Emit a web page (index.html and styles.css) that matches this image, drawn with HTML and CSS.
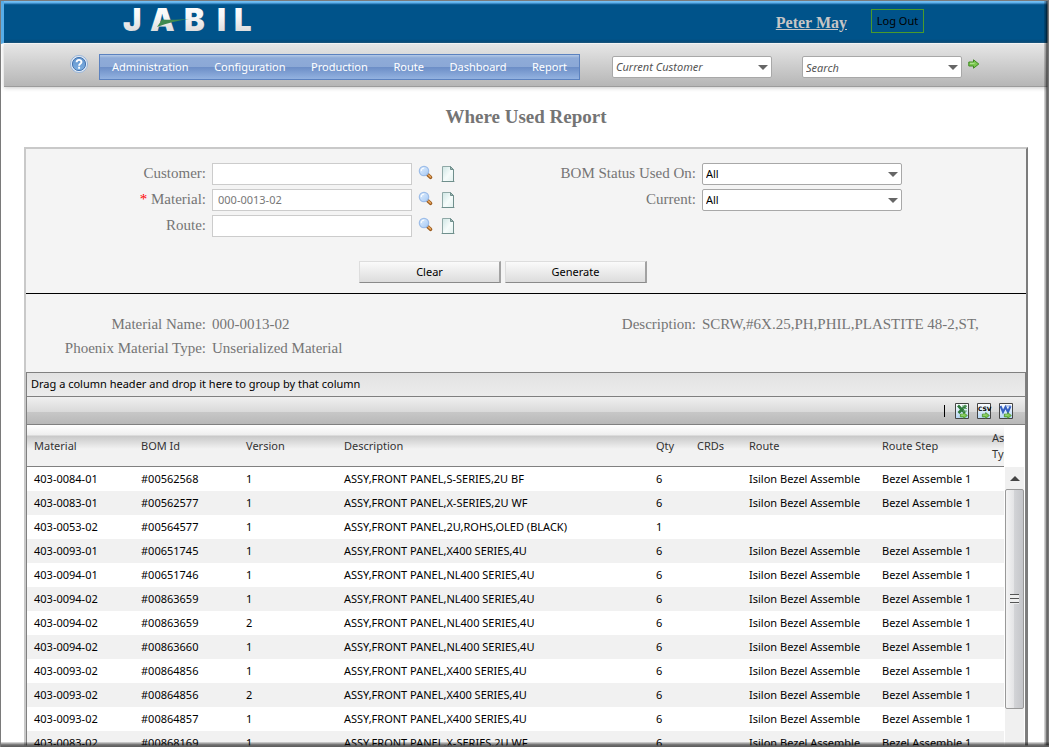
FILE: index.html
```html
<!DOCTYPE html>
<html lang="en">
<head>
<meta charset="utf-8">
<title>Where Used Report</title>
<link rel="stylesheet" href="styles.css">
</head>
<body>
<svg width="0" height="0" class="defs" aria-hidden="true">
  <defs>
    <linearGradient id="lens" x1="0" y1="0" x2="1" y2="1"><stop offset="0" stop-color="#e4f1ff"/><stop offset="1" stop-color="#a4c8f4"/></linearGradient>
    <linearGradient id="paper" x1="0" y1="0" x2="1" y2="1"><stop offset="0" stop-color="#cfe6e4"/><stop offset=".55" stop-color="#f6fcfb"/><stop offset="1" stop-color="#e2f0ee"/></linearGradient>
    <linearGradient id="sheet" x1="0" y1="0" x2="0" y2="1"><stop offset="0" stop-color="#ffffff"/><stop offset="1" stop-color="#b4d6f4"/></linearGradient>
    <linearGradient id="metal" x1="0" y1="0" x2="0" y2="1"><stop offset="0" stop-color="#ffffff"/><stop offset=".4" stop-color="#f8f8f8"/><stop offset="1" stop-color="#d2d2d2"/></linearGradient>
    <linearGradient id="ball" x1="0" y1="0" x2="0" y2="1"><stop offset="0" stop-color="#5f92cc"/><stop offset="1" stop-color="#7fb0e2"/></linearGradient>
    <symbol id="search" viewBox="0 0 16 16">
      <path d="M9.5 9.5 12.500 12.300" stroke="#9a5a1c" stroke-width="3.6" stroke-linecap="round"/>
      <path d="M10.6 10.2 12.500 12" stroke="#e9a860" stroke-width="1.6" stroke-linecap="round"/>
      <circle cx="6" cy="6" r="4.7" fill="url(#lens)" stroke="#9dbde8" stroke-width="1.2"/>
      <path d="M3.2 6a3 3 0 0 1 3-3" fill="none" stroke="#fff"/>
    </symbol>
    <symbol id="page" viewBox="0 0 16 18">
      <path d="M1 16.5h14" stroke="#c3cfce"/>
      <path d="M2.5 1.5h8l3 3v12h-11z" fill="url(#paper)" stroke="#8fa8a6"/>
      <path d="M10.5 1.5v3h3z" fill="#9fb8b5" stroke="#6f8f8c"/>
      <path d="M2 16.5h12M13.5 5v11" stroke="#6f8f8c"/>
    </symbol>
    <symbol id="arrow" viewBox="0 0 12 10">
      <path d="M.8 3h4.7V.8L10.8 5 5.500 9.200V7H.8z" fill="#7cc850" stroke="#3f8a22" stroke-linejoin="round"/>
      <path d="M2 4.300h4.500" stroke="#b8e89c"/>
    </symbol>
  </defs>
</svg>

<div class="app">
  <header class="banner">
    <svg class="logo" viewBox="0 0 136 28" role="img" aria-label="Jabil">
      <text class="wordmark" y="26" x="0 27 61 94 111" fill="url(#metal)">JABIL</text>
      <path d="M34 22 39 14.500C48 15 58 14.500 66 14 56 15.500 44 18 34 22z" fill="#3f8a50"/>
    </svg>
    <div class="user">
      <a class="user-name" href="#">Peter May</a>
      <button class="logout" type="button">Log Out</button>
    </div>
  </header>

  <div class="navbar">
    <a class="help" href="#" aria-label="Help">
      <svg width="20" height="20" viewBox="0 0 20 20"><circle cx="10" cy="10" r="8.600" fill="#dfe9f5" stroke="#9db8da"/><circle cx="10" cy="10" r="6.600" fill="url(#ball)" stroke="#4675b0"/><path d="M7.600 8.300c0-3.200 4.900-3.200 4.900-.2 0 1.700-2.400 1.700-2.400 3.600M10.100 12.700v2" fill="none" stroke="#fff" stroke-width="1.900"/></svg>
    </a>
    <nav class="menu">
      <a href="#">Administration</a>
      <a href="#">Configuration</a>
      <a href="#">Production</a>
      <a href="#">Route</a>
      <a href="#">Dashboard</a>
      <a href="#">Report</a>
    </nav>
    <div class="combo nav-combo customer-combo">
      <select aria-label="Current Customer"><option>Current Customer</option></select>
    </div>
    <div class="combo nav-combo">
      <input type="text" placeholder="Search" aria-label="Search">
    </div>
    <button class="icon-button go" type="button" aria-label="Go"><svg width="12" height="10"><use href="#arrow"/></svg></button>
  </div>

  <main>
    <h1 class="title">Where Used Report</h1>
    <section class="panel">
      <form class="filters">
        <div class="columns">
          <div class="left">
            <div class="field">
              <label for="customer">Customer:</label>
              <input class="text" id="customer" type="text">
              <button class="icon-button" type="button" aria-label="Find customer"><svg width="16" height="16"><use href="#search"/></svg></button>
              <button class="icon-button" type="button" aria-label="Clear customer"><svg width="16" height="18"><use href="#page"/></svg></button>
            </div>
            <div class="field">
              <label for="material"><span class="required">*</span> Material:</label>
              <input class="text" id="material" type="text" value="000-0013-02">
              <button class="icon-button" type="button" aria-label="Find material"><svg width="16" height="16"><use href="#search"/></svg></button>
              <button class="icon-button" type="button" aria-label="Clear material"><svg width="16" height="18"><use href="#page"/></svg></button>
            </div>
            <div class="field">
              <label for="route">Route:</label>
              <input class="text" id="route" type="text">
              <button class="icon-button" type="button" aria-label="Find route"><svg width="16" height="16"><use href="#search"/></svg></button>
              <button class="icon-button" type="button" aria-label="Clear route"><svg width="16" height="18"><use href="#page"/></svg></button>
            </div>
          </div>
          <div class="right">
            <div class="field">
              <label for="status">BOM Status Used On:</label>
              <div class="combo"><select id="status"><option>All</option></select></div>
            </div>
            <div class="field">
              <label for="current">Current:</label>
              <div class="combo"><select id="current"><option>All</option></select></div>
            </div>
          </div>
        </div>
        <div class="actions">
          <button class="push" type="button">Clear</button>
          <button class="push" type="button">Generate</button>
        </div>
      </form>

      <div class="columns details">
        <dl class="left">
          <div class="field"><dt>Material Name:</dt><dd>000-0013-02</dd></div>
          <div class="field"><dt>Phoenix Material Type:</dt><dd>Unserialized Material</dd></div>
        </dl>
        <dl class="right">
          <div class="field"><dt>Description:</dt><dd>SCRW,#6X.25,PH,PHIL,PLASTITE 48-2,ST,</dd></div>
        </dl>
      </div>

      <div class="grid">
        <div class="group-bar">Drag a column header and drop it here to group by that column</div>
        <div class="toolbar">
          <span class="separator"></span>
          <button class="icon-button" type="button" aria-label="Export to Excel"><svg width="16" height="16" viewBox="0 0 16 16"><path d="M1.500.5h13v15h-13z" fill="url(#sheet)" stroke="#444"/><path d="M4 2.500 11 10M12 2.500 4.500 10" stroke="#2f7a3c" stroke-width="2.600"/><path d="M8 3h5M9 5.500h4M9 8h4" stroke="#6aa870"/><use href="#arrow" x="5" y="9" width="10" height="7"/></svg></button>
          <button class="icon-button" type="button" aria-label="Export to CSV"><svg width="16" height="16" viewBox="0 0 16 16"><path d="M1.500.5h13v15h-13z" fill="url(#sheet)" stroke="#444"/><text class="csv" x="2" y="8">CSV</text><use href="#arrow" x="5" y="9" width="10" height="7"/></svg></button>
          <button class="icon-button" type="button" aria-label="Export to Word"><svg width="16" height="16" viewBox="0 0 16 16"><path d="M1.500.5h13v15h-13z" fill="url(#sheet)" stroke="#444"/><path d="M2.500 3 5 9 7.500 4 10 9 12.500 3" fill="none" stroke="#3560c0" stroke-width="2"/><path d="M8 3h5" stroke="#7c9ce0"/><use href="#arrow" x="5" y="9" width="10" height="7"/></svg></button>
        </div>
        <div class="grid-body">
          <div class="rows">
            <table>
              <colgroup><col class="c-material"><col class="c-bom"><col class="c-version"><col><col class="c-qty"><col class="c-crds"><col class="c-route"><col class="c-step"><col class="c-type"></colgroup>
              <thead><tr><th>Material</th><th>BOM Id</th><th>Version</th><th>Description</th><th>Qty</th><th>CRDs</th><th>Route</th><th>Route Step</th><th>Assembly Type</th></tr></thead>
              <tbody>
                <tr><td>403-0084-01</td><td>#00562568</td><td>1</td><td>ASSY,FRONT PANEL,S-SERIES,2U BF</td><td>6</td><td></td><td>Isilon Bezel Assemble</td><td>Bezel Assemble 1</td><td></td></tr>
                <tr><td>403-0083-01</td><td>#00562577</td><td>1</td><td>ASSY,FRONT PANEL,X-SERIES,2U WF</td><td>6</td><td></td><td>Isilon Bezel Assemble</td><td>Bezel Assemble 1</td><td></td></tr>
                <tr><td>403-0053-02</td><td>#00564577</td><td>1</td><td>ASSY,FRONT PANEL,2U,ROHS,OLED (BLACK)</td><td>1</td><td></td><td></td><td></td><td></td></tr>
                <tr><td>403-0093-01</td><td>#00651745</td><td>1</td><td>ASSY,FRONT PANEL,X400 SERIES,4U</td><td>6</td><td></td><td>Isilon Bezel Assemble</td><td>Bezel Assemble 1</td><td></td></tr>
                <tr><td>403-0094-01</td><td>#00651746</td><td>1</td><td>ASSY,FRONT PANEL,NL400 SERIES,4U</td><td>6</td><td></td><td>Isilon Bezel Assemble</td><td>Bezel Assemble 1</td><td></td></tr>
                <tr><td>403-0094-02</td><td>#00863659</td><td>1</td><td>ASSY,FRONT PANEL,NL400 SERIES,4U</td><td>6</td><td></td><td>Isilon Bezel Assemble</td><td>Bezel Assemble 1</td><td></td></tr>
                <tr><td>403-0094-02</td><td>#00863659</td><td>2</td><td>ASSY,FRONT PANEL,NL400 SERIES,4U</td><td>6</td><td></td><td>Isilon Bezel Assemble</td><td>Bezel Assemble 1</td><td></td></tr>
                <tr><td>403-0094-02</td><td>#00863660</td><td>1</td><td>ASSY,FRONT PANEL,NL400 SERIES,4U</td><td>6</td><td></td><td>Isilon Bezel Assemble</td><td>Bezel Assemble 1</td><td></td></tr>
                <tr><td>403-0093-02</td><td>#00864856</td><td>1</td><td>ASSY,FRONT PANEL,X400 SERIES,4U</td><td>6</td><td></td><td>Isilon Bezel Assemble</td><td>Bezel Assemble 1</td><td></td></tr>
                <tr><td>403-0093-02</td><td>#00864856</td><td>2</td><td>ASSY,FRONT PANEL,X400 SERIES,4U</td><td>6</td><td></td><td>Isilon Bezel Assemble</td><td>Bezel Assemble 1</td><td></td></tr>
                <tr><td>403-0093-02</td><td>#00864857</td><td>1</td><td>ASSY,FRONT PANEL,X400 SERIES,4U</td><td>6</td><td></td><td>Isilon Bezel Assemble</td><td>Bezel Assemble 1</td><td></td></tr>
                <tr><td>403-0083-02</td><td>#00868169</td><td>1</td><td>ASSY,FRONT PANEL,X-SERIES,2U WF</td><td>6</td><td></td><td>Isilon Bezel Assemble</td><td>Bezel Assemble 1</td><td></td></tr>
              </tbody>
            </table>
          </div>
          <div class="scrollbar" aria-hidden="true">
            <div class="scroll-up"></div>
            <div class="scroll-thumb"><span class="grip"></span></div>
          </div>
        </div>
      </div>
    </section>
  </main>
</div>
</body>
</html>
```
FILE: styles.css
```css
* { box-sizing: border-box; }

body {
  margin: 0;
  background: #fff;
  color: #000;
  font: 11px/16px "Noto Sans", "Open Sans", sans-serif;
}

button, input, select { font: inherit; color: inherit; }
a { color: inherit; }
.defs { position: absolute; }

/* Window frame */
.app {
  position: relative;
  height: 100vh;
  overflow: hidden;
  border-top: 1px solid #7a7a7a;
  border-left: 1px solid #7a7a7a;
}
.app::before, .app::after {
  content: "";
  position: absolute;
  z-index: 2;
  pointer-events: none;
}
.app::before {
  inset: 0 0 0 auto;
  width: 5px;
  background: linear-gradient(to right, rgba(0,0,0,.12), rgba(0,0,0,.3) 30%, rgba(0,0,0,.65) 60%, #777 80%);
}
.app::after {
  inset: auto 0 0 0;
  height: 5px;
  background: linear-gradient(to bottom, rgba(0,0,0,.1), rgba(0,0,0,.5) 50%, #606060 80%);
}

/* Banner */
.banner {
  display: flex;
  justify-content: space-between;
  height: 43px;
  padding: 4px 125px 0 119px;
  border-left: 3px solid #57ade8;
  border-bottom: 1px solid #fff;
  background: linear-gradient(to bottom, #7cc6f8 0, #58abe6 2px, #1d6aa6 3px, #00538a 4px, #00538a 38px, #00426e 42px);
}
.logo { width: 136px; height: 28px; overflow: visible; }
.wordmark { font: 900 31px Inter, "Liberation Sans", sans-serif; }
.user { display: flex; align-items: flex-start; gap: 24px; padding-top: 4px; }
.user-name {
  color: #c6c6c6;
  font: bold 16px/28px "Liberation Serif", serif;
}
.logout {
  width: 53px;
  height: 24px;
  padding: 0;
  border: 1px solid #4a9a2c;
  background: none;
  color: #000;
}

/* Navigation */
.navbar {
  display: flex;
  align-items: flex-start;
  height: 43px;
  margin-left: 3px;
  padding: 10px 0 0 65px;
  border-bottom: 1px solid #9c9c9c;
  background: linear-gradient(#e6e6e6, #b6b6b6);
  box-shadow: 0 1px 4px #ccc;
}
.help { display: block; height: 20px; margin-right: 10px; }
.menu {
  display: flex;
  justify-content: space-between;
  width: 481px;
  height: 26px;
  border: 1px solid #5c82bf;
  background: linear-gradient(#b4c9e6 0, #8fabd8 3px, #8ba8d6 50%, #6b8dc6 50%, #93b2e0);
  color: #fff;
}
.menu a { padding: 0 12px; line-height: 24px; text-decoration: none; }

.combo { position: relative; width: 200px; height: 22px; }
.combo::after {
  content: "";
  position: absolute;
  top: 9px;
  right: 4px;
  border: 5px solid transparent;
  border-top-color: #666;
  border-bottom: 0;
  pointer-events: none;
}
.combo select, .combo input {
  display: block;
  width: 100%;
  height: 100%;
  padding: 0 16px 0 3px;
  border: 1px solid #a8a8a8;
  border-radius: 2px;
  background: #fff;
  appearance: none;
}
.nav-combo { width: 160px; margin-top: 2px; font-style: italic; color: #555; }
.nav-combo input::placeholder { color: #555; opacity: 1; }
.customer-combo { margin: 2px 30px 0 32px; }

.icon-button { display: block; padding: 0; border: 0; background: none; line-height: 0; }
.icon-button svg { display: block; }
.go { margin: 5px 0 0 6px; }

/* Report panel */
.title {
  margin: 0;
  color: #747474;
  font: bold 19px/60px "Liberation Serif", serif;
  text-align: center;
}
main { padding: 0 21px 0 23px; }
.panel {
  border: 2px solid #c9c9c9;
  border-right-color: #7c7c7c;
  background: #f4f4f4;
}
.filters { padding: 14px 0 10px; border-bottom: 1px solid #000; }
.columns {
  display: grid;
  grid-template-columns: 1fr 1fr;
  color: #757575;
  font: 15px/20px "Liberation Serif", serif;
}
.field { display: flex; align-items: center; height: 26px; white-space: nowrap; }
.field label, .field dt { flex: none; width: 180px; margin-right: 6px; text-align: right; }
.right .field label, .right .field dt { width: 170px; }
.field input, .field select { font: 11px/16px "Noto Sans", "Open Sans", sans-serif; }
.field select { color: #000; }
.text {
  width: 200px;
  height: 22px;
  padding: 0 5px 2px;
  border: 1px solid #ccc;
  background: #fff;
  color: #777;
}
.filters .field { align-items: flex-start; }
.field .icon-button { margin: 2px 0 0 6px; }
.required { color: #f00; }
.actions { display: flex; justify-content: center; gap: 4px; padding: 20px 46px 0 0; }
.push {
  width: 142px;
  height: 22px;
  padding: 0;
  border: 1px solid #ddd;
  border-right: 2px solid #a2a2a2;
  border-bottom: 1px solid #8a8a8a;
  background: linear-gradient(#fafafa, #dcdcdc);
  color: #000;
}
.details { padding: 18px 0 12px; }
.details dl, .details dd { margin: 0; }
.details .field { height: 24px; }

/* Data grid */
.grid { border: 1px solid #808080; }
.group-bar { padding: 3px 4px 4px; border-bottom: 1px solid #808080; background: linear-gradient(#e2e2e2, #ececec); }
.toolbar {
  display: flex;
  align-items: center;
  justify-content: flex-end;
  gap: 6px;
  height: 28px;
  padding-right: 11px;
  border-bottom: 1px solid #808080;
  background: linear-gradient(#f0f0f0, #dadada 54%, #c8c8c8 54%, #b8b8b8);
}
.separator { width: 1px; height: 12px; margin-right: 3px; background: #000; }
.csv { font: bold 6px "DejaVu Sans", sans-serif; }
.grid-body { display: grid; grid-template-columns: minmax(0, 1fr) 21px; background: #fff; }
.rows { overflow: hidden; }
table { width: calc(100% + 49px); border-collapse: separate; border-spacing: 0; table-layout: fixed; }
th, td { padding: 0 0 0 7px; text-align: left; white-space: nowrap; }
th {
  height: 42px;
  border-bottom: 1px solid #808080;
  background: linear-gradient(#fff, #eee 10px, #c8c8c8 11px, #f2f2f2 24px);
  color: #333;
  font-weight: normal;
  white-space: normal;
}
td { height: 24px; }
tbody tr:nth-child(even) { background: #f1f1f1; }
.c-material { width: 107px; }
.c-bom { width: 105px; }
.c-version { width: 98px; }
.c-qty { width: 41px; }
.c-crds { width: 52px; }
.c-route { width: 133px; }
.c-step { width: 110px; }
.c-type { width: 68px; }

.scrollbar { margin: 42px 1px 0 1px; background: #f0f0f0; }
.scroll-up { display: flex; justify-content: center; align-items: center; height: 22px; }
.scroll-up::before { content: ""; border: 5px solid transparent; border-top: 0; border-bottom-color: #444; }
.scroll-thumb {
  display: grid;
  place-items: center;
  height: 220px;
  border: 1px solid #999;
  border-radius: 2px;
  background: linear-gradient(to right, #f4f4f4, #e4e4e6 45%, #d2d3d6 50%, #c4c5c9);
}
.grip { width: 9px; height: 10px; background: repeating-linear-gradient(#555 0, #555 1px, #eee 1px, #eee 4px); }
```
